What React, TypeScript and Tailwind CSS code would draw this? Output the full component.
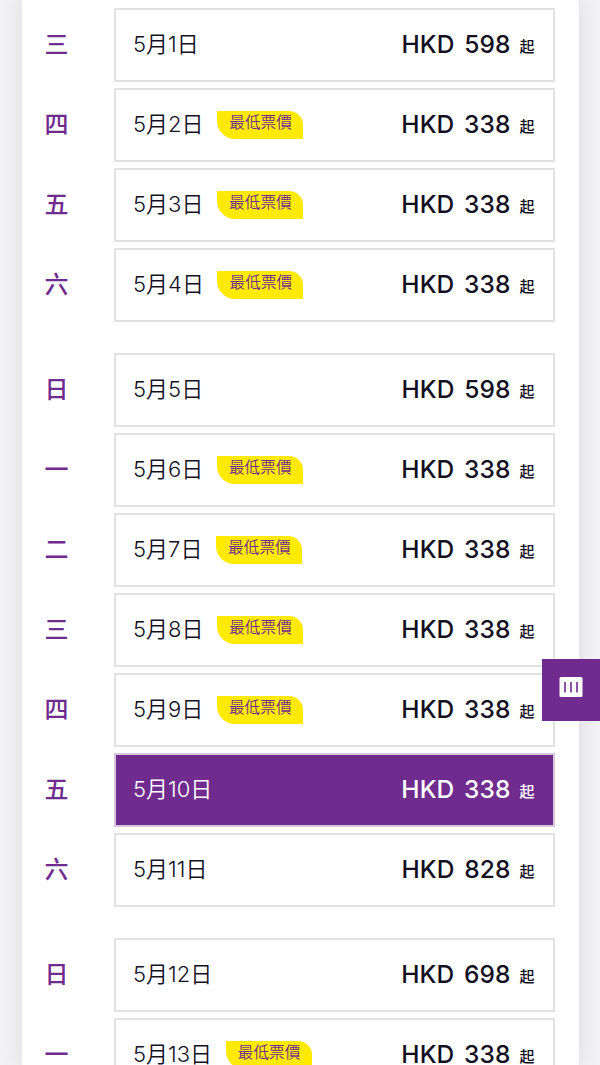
import clsx from "clsx";

type Day = {
  weekday: string;
  date: number;
  price: number;
  lowest?: boolean;
  selected?: boolean;
};

// one array per calendar week
const weeks: Day[][] = [
  [
    { weekday: "三", date: 1, price: 598 },
    { weekday: "四", date: 2, price: 338, lowest: true },
    { weekday: "五", date: 3, price: 338, lowest: true },
    { weekday: "六", date: 4, price: 338, lowest: true },
  ],
  [
    { weekday: "日", date: 5, price: 598 },
    { weekday: "一", date: 6, price: 338, lowest: true },
    { weekday: "二", date: 7, price: 338, lowest: true },
    { weekday: "三", date: 8, price: 338, lowest: true },
    { weekday: "四", date: 9, price: 338, lowest: true },
    { weekday: "五", date: 10, price: 338, selected: true },
    { weekday: "六", date: 11, price: 828 },
  ],
  [
    { weekday: "日", date: 12, price: 698 },
    { weekday: "一", date: 13, price: 338, lowest: true },
  ],
];

function DayRow({ weekday, date, price, lowest, selected }: Day) {
  return (
    <li className="flex h-[74px] shrink-0">
      <div className="flex w-[92px] items-center pb-px pl-[23px] text-2xl font-medium text-[#702b8f]">
        {weekday}
      </div>
      <div
        className={clsx(
          "flex w-[441px] items-center justify-between border-2 pr-[18px] pl-[18px]",
          selected
            ? "border-[#d5c6dc] bg-[#702b8f] text-white"
            : "border-[#e2e2e2] bg-white text-[#13101f]"
        )}
      >
        <div className="flex items-center">
          <span className="-ml-[0.5px] pb-px text-[22px] font-[350] whitespace-nowrap">5月{date}日</span>
          {lowest && (
            <span className="ml-[13.5px] flex h-[28px] w-[86px] items-center justify-center rounded-tr-[14px] rounded-bl-[18px] bg-[#ffea00] pb-[4px] pl-px text-[15.7px] leading-none font-[350] text-[#702b8f]">
              最低票價
            </span>
          )}
        </div>
        <div className="flex items-baseline pb-px font-medium">
          <span className="text-[24.5px] font-[550] tracking-[0.1px] [word-spacing:3px] whitespace-nowrap">HKD {price}</span>
          <span className="relative -top-px ml-[9px] text-[15px]">起</span>
        </div>
      </div>
    </li>
  );
}

export default function App() {
  return (
    <main className="relative h-[1065px] w-[600px] overflow-hidden bg-[#f2f2f6] font-[Inter,'Noto_Sans_CJK_TC',sans-serif]">
      <div className="mx-auto flex h-full w-[557px] flex-col gap-[31px] bg-white pt-[8px] shadow-[0_0_20px_rgba(0,0,0,0.1)]">
        {weeks.map((week, i) => (
          <ul key={i} className="flex flex-col gap-[6px]">
            {week.map((day) => (
              <DayRow key={day.date} {...day} />
            ))}
          </ul>
        ))}
      </div>

      {/* floating tab stuck to the right edge */}
      <button
        aria-label="menu"
        className="absolute top-[659px] right-0 flex h-[62px] w-[58.5px] items-center justify-center bg-[#702b8f] pb-[6px]"
      >
        <svg width="24" height="20" viewBox="0 0 24 20">
          <rect width="23" height="20" x="0.5" rx="1.5" fill="#fff" />
          <path d="M6 5v10.500M12 5v10.500M18 5v10.500" stroke="#702b8f" strokeWidth="1.6" />
        </svg>
      </button>
    </main>
  );
}
